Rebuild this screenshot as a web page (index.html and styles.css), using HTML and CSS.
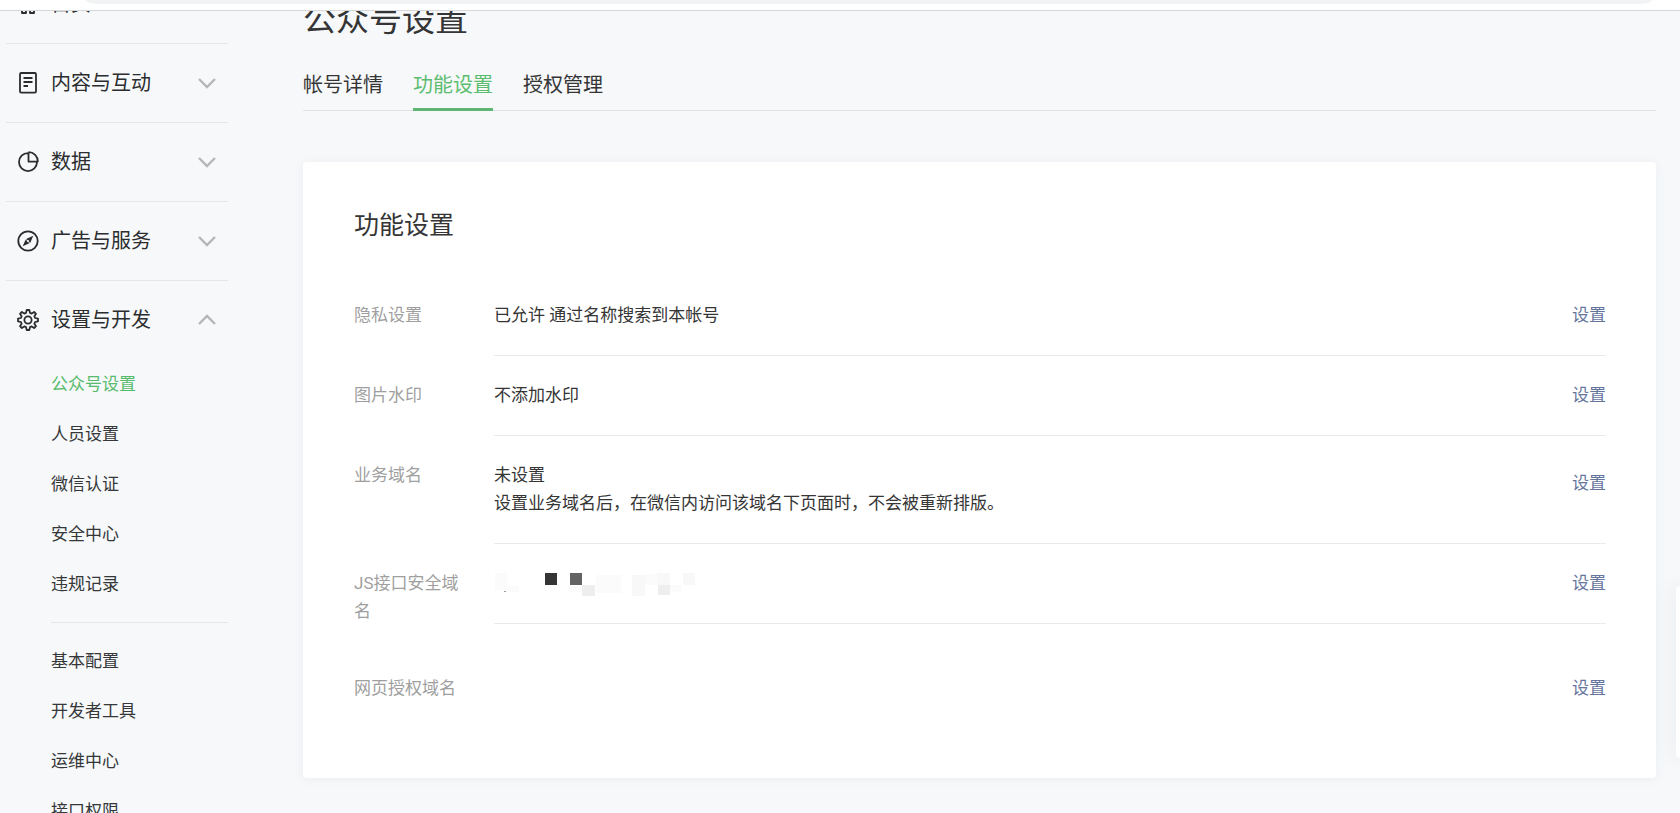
FILE: index.html
```
<!DOCTYPE html>
<html lang="zh-CN">
<head>
<meta charset="utf-8">
<title>公众号设置</title>
<link rel="stylesheet" href="styles.css">
</head>
<body>
<div class="browser-bar"><div class="address"></div></div>
<div class="viewport">
  <nav class="sidebar" aria-label="主菜单">
    <section class="group">
      <button class="group-head" type="button">
        <svg class="icon" viewBox="0 0 24 24"><path d="M3 11.500 12 3.500l9 8M6 10v11h4v-6h4v6h4V10"/></svg>
        <span>首页</span>
      </button>
    </section>
    <section class="group">
      <button class="group-head" type="button">
        <svg class="icon" viewBox="0 0 24 24"><rect x="4" y="2" width="16" height="19.600" rx="1.200"/><path d="M7.500 7h9M7.500 11h9M7.500 15h4.500"/></svg>
        <span>内容与互动</span>
        <svg class="chevron" viewBox="0 0 18 12"><path d="M1 2l8 8 8-8"/></svg>
      </button>
    </section>
    <section class="group">
      <button class="group-head" type="button">
        <svg class="icon" viewBox="0 0 24 24"><path d="M12.500 3.100H12a9 9 0 1 0 9 9V11.600h-8.500zM12.500 2.200a9.200 9.200 0 0 1 9.300 9.400H21"/></svg>
        <span>数据</span>
        <svg class="chevron" viewBox="0 0 18 12"><path d="M1 2l8 8 8-8"/></svg>
      </button>
    </section>
    <section class="group">
      <button class="group-head" type="button">
        <svg class="icon" viewBox="0 0 24 24"><circle cx="12" cy="12" r="9.700"/><path class="solid" d="M17.300 6.700l-3.200 7.300-4-4z"/><path class="solid" d="M6.700 17.300l3-6.800 3.700 3.700z"/><circle class="hole" cx="12" cy="12" r="1.100"/></svg>
        <span>广告与服务</span>
        <svg class="chevron" viewBox="0 0 18 12"><path d="M1 2l8 8 8-8"/></svg>
      </button>
    </section>
    <section class="group">
      <button class="group-head" type="button" aria-expanded="true">
        <svg class="icon" viewBox="0 0 24 24"><path d="M10.700 2h2.600l.7 2.900 1.700.7 2.500-1.600 1.800 1.800-1.600 2.500.7 1.700 2.900.7v2.600l-2.900.7-.7 1.700 1.600 2.500-1.800 1.800-2.500-1.600-1.700.7-.7 2.900h-2.600l-.7-2.900-1.700-.7L5.800 20 4 18.200l1.600-2.500-.7-1.700-2.900-.7v-2.600l2.900-.7.7-1.700L4 5.800 5.800 4l2.500 1.600 1.700-.7z"/><circle cx="12" cy="12" r="3.600"/></svg>
        <span>设置与开发</span>
        <svg class="chevron" viewBox="0 0 18 12"><path d="M1 10l8-8 8 8"/></svg>
      </button>
      <ul class="submenu">
        <li><a class="current" href="#">公众号设置</a></li>
        <li><a href="#">人员设置</a></li>
        <li><a href="#">微信认证</a></li>
        <li><a href="#">安全中心</a></li>
        <li><a href="#">违规记录</a></li>
      </ul>
      <ul class="submenu">
        <li><a href="#">基本配置</a></li>
        <li><a href="#">开发者工具</a></li>
        <li><a href="#">运维中心</a></li>
        <li><a href="#">接口权限</a></li>
      </ul>
    </section>
  </nav>
  <main class="main">
    <h1 class="page-title">公众号设置</h1>
    <nav class="tabs" aria-label="设置">
      <a href="#">帐号详情</a>
      <a class="active" href="#">功能设置</a>
      <a href="#">授权管理</a>
    </nav>
    <section class="card">
      <h2 class="card-title">功能设置</h2>
      <ul class="settings">
        <li class="setting">
          <span class="label">隐私设置</span>
          <div class="detail"><p>已允许 通过名称搜索到本帐号</p><a class="action" href="#">设置</a></div>
        </li>
        <li class="setting">
          <span class="label">图片水印</span>
          <div class="detail"><p>不添加水印</p><a class="action" href="#">设置</a></div>
        </li>
        <li class="setting tall">
          <span class="label">业务域名</span>
          <div class="detail"><p>未设置<br>设置业务域名后，在微信内访问该域名下页面时，不会被重新排版。</p><a class="action" href="#">设置</a></div>
        </li>
        <li class="setting">
          <span class="label">JS接口安全域名</span>
          <div class="detail">
            <svg class="mosaic" viewBox="0 0 204 28" aria-hidden="true">
              <g fill="#fbfbfb"><path d="M1 4h12v17H1zM13 17h12v6H13zM102 6h25v18h-25zM74 17h14v6H74zM151 5h12v11h-12zM176 16h12v7h-12z"/></g>
              <g fill="#f8f8f8"><path d="M138 6h13v21h-13zM163 4h13v12h-13zM189 4h12v12h-12z"/></g>
              <g fill="#eee"><path d="M88 16h13v11H88zM164 16h12v10h-12z"/></g>
              <path fill="#353535" d="M51 4h12v12H51z"/>
              <path fill="#636363" d="M76 4h12v12H76z"/>
              <path fill="#999" d="M10 22h2v1h-2z"/>
            </svg>
            <a class="action" href="#">设置</a>
          </div>
        </li>
        <li class="setting last">
          <span class="label">网页授权域名</span>
          <div class="detail"><p></p><a class="action" href="#">设置</a></div>
        </li>
      </ul>
    </section>
  </main>
</div>
<aside class="side-panel"></aside>
</body>
</html>
```
FILE: styles.css
```
* { box-sizing: border-box; }

body {
  margin: 0;
  height: 100vh;
  display: flex;
  flex-direction: column;
  overflow: hidden;
  background: #f6f8fa;
  color: #353535;
  font-family: Roboto, "Noto Sans CJK SC", sans-serif;
  font-size: 17px;
  line-height: 28px;
}

h1, h2, p, ul { margin: 0; padding: 0; font-weight: 400; }
ul { list-style: none; }
a { color: inherit; text-decoration: none; }

.browser-bar {
  flex: none;
  height: 11px;
  padding: 0 28px 0 86px;
  background: #fff;
  border-bottom: 1px solid #d5d7d8;
}
.address {
  height: 4px;
  background: #f1f3f4;
  border-radius: 0 0 12px 12px / 0 0 4px 4px;
}

.viewport {
  flex: 1;
  min-height: 0;
  display: flex;
  align-items: flex-start;
  overflow: hidden;
}

/* Sidebar */
.sidebar {
  flex: none;
  width: 228px;
  margin-top: -46px;
  padding-left: 6px;
}
.group + .group { border-top: 1px solid #e4e6e8; }
.group-head {
  display: flex;
  align-items: center;
  gap: 11px;
  width: 100%;
  height: 78px;
  padding: 0 12px 0 10px;
  border: 0;
  background: none;
  color: #2b2d2f;
  font: inherit;
  font-size: 20px;
  text-align: left;
}
.icon {
  width: 24px;
  height: 24px;
  fill: none;
  stroke: #2a2c2e;
  stroke-width: 1.800;
  stroke-linejoin: round;
}
.icon .solid { fill: #2a2c2e; stroke: none; }
.icon .hole { fill: #f6f8fa; stroke: none; }
.chevron {
  width: 18px;
  height: 12px;
  margin-left: auto;
  fill: none;
  stroke: #b4b6b8;
  stroke-width: 2.400;
}
.submenu {
  margin-left: 45px;
  color: #353739;
}
.submenu + .submenu {
  margin-top: 13px;
  padding-top: 13px;
  border-top: 1px solid #e4e6e8;
}
.submenu a {
  display: block;
  line-height: 50px;
}
.submenu .current { color: #56bb6b; }

/* Main column */
.main {
  flex: 1;
  min-width: 0;
  margin-top: -15px;
  padding: 0 24px 0 75px;
}
.page-title {
  font-size: 33px;
  line-height: 48px;
}
.tabs {
  display: flex;
  gap: 30px;
  margin-top: 14px;
  border-bottom: 1px solid #e0e3e5;
  font-size: 20px;
}
.tabs a {
  margin-bottom: -1px;
  padding: 13px 0 9px;
  border-bottom: 3px solid transparent;
}
.tabs .active {
  color: #5cbd70;
  border-color: #5fb673;
}
.card {
  margin-top: 51px;
  padding: 45px 50px 76px 51px;
  background: #fff;
  border-radius: 4px;
  box-shadow: 0 1px 10px rgba(100, 120, 130, 0.08);
}
.card-title {
  font-size: 25px;
  line-height: 38px;
}
.settings {
  display: flex;
  flex-direction: column;
  gap: 25px;
  margin-top: 56px;
}
.setting { display: flex; align-items: flex-start; }
.label {
  flex: none;
  width: 140px;
  padding-right: 30px;
  color: #9f9f9f;
}
.detail {
  flex: 1;
  min-width: 0;
  display: flex;
  justify-content: space-between;
  align-items: flex-start;
  padding-bottom: 26px;
  border-bottom: 1px solid #eaeaea;
}
.action { flex: none; color: #65759d; }
.tall .action { padding-top: 8px; }
.last { margin-top: 24px; }
.last .detail { padding-bottom: 0; border-bottom: 0; }
.mosaic { width: 204px; height: 28px; }

.side-panel {
  position: fixed;
  top: 586px;
  right: 0;
  width: 4px;
  height: 172px;
  background: #fff;
  border-radius: 4px 0 0 4px;
  box-shadow: 0 0 20px rgba(60, 70, 80, 0.18);
}
```
